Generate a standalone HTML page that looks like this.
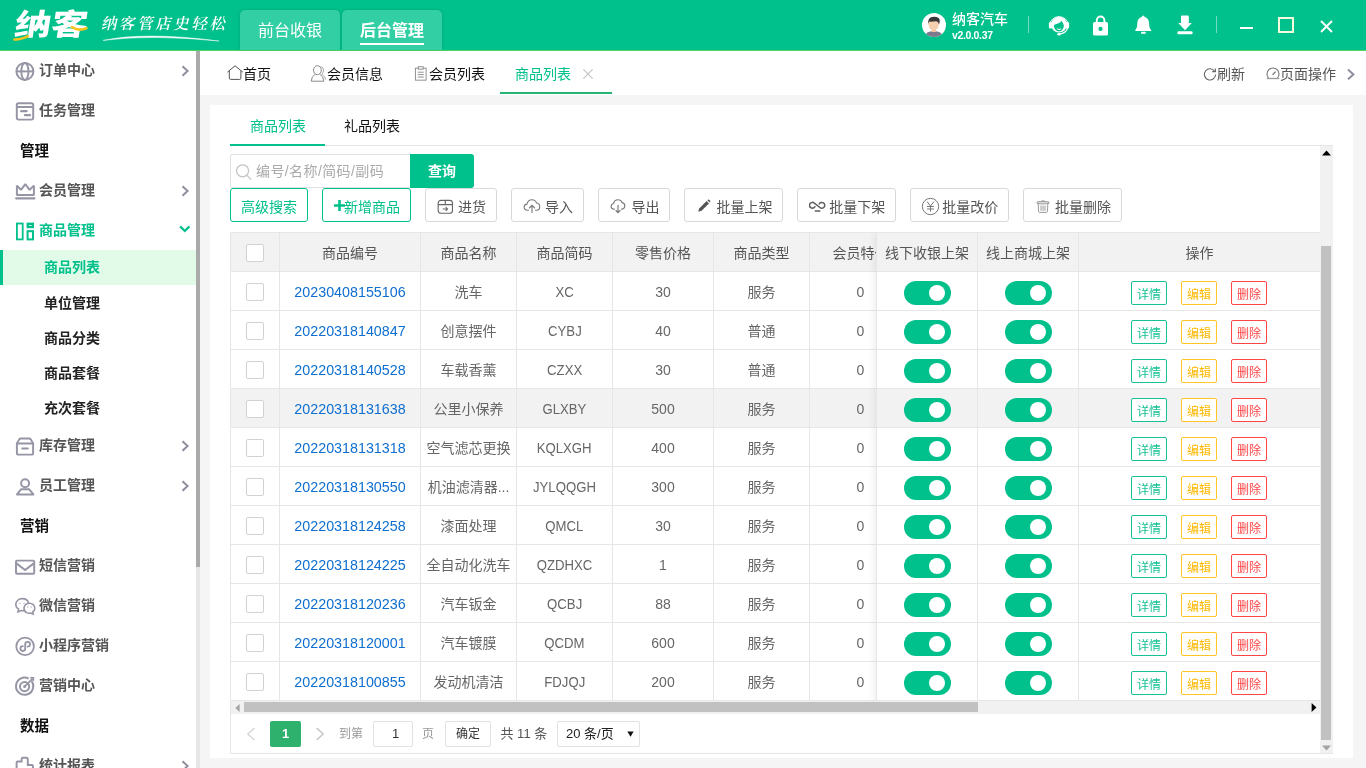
<!DOCTYPE html>
<html lang="zh-CN"><head><meta charset="utf-8"><title>纳客 - 商品列表</title>
<style>
*{box-sizing:border-box;margin:0;padding:0}
html,body{width:1366px;height:768px;overflow:hidden;background:#f5f5f5}
body{font-family:"Liberation Sans","Noto Sans CJK SC",sans-serif;font-size:14px;color:#333}
#app{will-change:transform;position:relative;width:1366px;height:768px;overflow:hidden;background:#f5f5f5}
.abs{position:absolute}
i{font-style:normal}
/* header */
.hd{position:absolute;left:0;top:0;width:1366px;height:51px;background:#00c08b;border-bottom:1px solid #4cd564}
.logo{position:absolute;left:15px;top:1.5px;font-family:"Liberation Sans","Noto Sans CJK SC",sans-serif;font-weight:900;font-size:35px;line-height:46px;color:#fff;letter-spacing:0;transform:skewX(-9deg) scale(1.04,.85);transform-origin:0 50%;white-space:nowrap}
.slogan{position:absolute;left:101.5px;top:12px;font-family:"Liberation Serif","Noto Serif CJK SC",serif;font-weight:600;font-size:15.5px;line-height:24px;color:#fff;letter-spacing:2.6px;transform:skewX(-12deg);white-space:nowrap}
.ntab{position:absolute;top:10px;height:40px;width:100px;box-shadow:0 0 3px rgba(0,80,50,.22);background:#33cfa4;border-radius:5px 5px 0 0;color:#fff;font-size:16px;line-height:42px;text-align:center}
.ntab.on{font-weight:bold}
.ntab.on:after{content:"";position:absolute;left:18px;right:18px;top:33px;height:2px;background:#fff}
.uname{position:absolute;left:952px;top:9.5px;font-size:14px;font-weight:500;color:#fff;line-height:18px;white-space:nowrap}
.uver{position:absolute;left:952px;top:28px;font-size:10.5px;font-weight:bold;color:#fff;line-height:14px;letter-spacing:-.35px}
.vsep{position:absolute;top:16px;width:1px;height:17px;background:rgba(255,255,255,.45)}
/* sidebar */
.sb{position:absolute;left:0;top:51px;width:196px;height:717px;background:#fff;overflow:hidden}
.sbar{position:absolute;left:196px;top:51px;width:4px;height:717px;background:#e6e6e6}
.sbar i{position:absolute;left:0;top:0;width:4px;height:516px;background:#aaa;display:block}
.mi{position:absolute;left:0;width:196px;height:40px;line-height:39px;font-weight:bold;color:#555;font-size:14px;padding-left:39px;white-space:nowrap}
.mi svg.ic{position:absolute;left:13px;top:8px;width:24px;height:24px}
.mi svg.ar{position:absolute;left:177.5px;top:13px;width:14px;height:14px}
.mi.on{color:#00c08b}
.mt{position:absolute;left:20px;width:160px;height:40px;line-height:40px;font-weight:bold;color:#111;font-size:14.5px}
.si{position:absolute;left:0;width:196px;height:35px;line-height:35px;font-weight:bold;color:#222;font-size:14px;padding-left:44px}
.si.on{background:#e2fbe9;color:#00c08b;border-left:3px solid #00c08b;padding-left:41px}
/* tab bar */
.tb{position:absolute;left:200px;top:51px;width:1166px;height:44px;background:#fff}
.tb .t{position:absolute;top:0;height:44px;line-height:46px;font-size:14px;color:#111;white-space:nowrap}
.tb .t.g{color:#555}
.tb .t.on{color:#00c08b}
.tb svg{position:absolute}
.tb .ul{position:absolute;left:300px;top:41px;width:112px;height:2px;background:#22b573}
/* card */
.card{position:absolute;left:210px;top:105px;width:1143px;height:653px;background:#fff}
.itab{position:absolute;top:0;height:41px;line-height:42px;font-size:14px;color:#111;white-space:nowrap}
.itab.on{color:#00c08b}
.iline{position:absolute;left:20px;top:40px;width:1103px;height:1px;background:#e6e6e6}
.iul{position:absolute;left:20px;top:39px;width:95px;height:2px;background:#00c08b}
.scr{position:absolute;left:20px;top:41px;width:1103px;height:608px;border-bottom:1px solid #e6e6e6}
.vsb{position:absolute;left:1110px;top:41px;width:13px;height:607px;background:#f1f1f1}
.vsb i{position:absolute;left:1px;top:100px;width:10px;height:494px;background:#c1c1c1;display:block}
.inp{position:absolute;left:20px;top:49px;width:181px;height:34px;border:1px solid #e0e0e0;border-radius:2px 0 0 2px;background:#fff;color:#aaa;line-height:32px;padding-left:25px;white-space:nowrap;letter-spacing:.4px}
.qbtn{position:absolute;left:200px;top:49px;width:64px;height:34px;background:#00c08b;color:#fff;font-weight:bold;text-align:center;line-height:34px;border-radius:0 3px 3px 0}
.btn{position:absolute;top:83px;height:34px;border:1px solid #d9d9d9;border-radius:3px;background:#fff;color:#555;line-height:36px;white-space:nowrap;font-size:14px}
.btn.g{border-color:#00c08b;color:#00c08b;text-align:center}
.btn span{position:absolute;top:0}
.btn svg{position:absolute}
/* table */
.tbl{position:absolute;left:20px;top:127px;width:1090px;height:469px;overflow:hidden;border-left:1px solid #e6e6e6;border-top:1px solid #e6e6e6}
.tr{position:absolute;left:0;width:1090px;height:39px}
.td{position:absolute;top:0;height:39px;border-right:1px solid #e6e6e6;border-bottom:1px solid #e6e6e6;text-align:center;line-height:41px;color:#666;white-space:nowrap;overflow:hidden;background:#fff}
.th .td{background:#f2f2f2;color:#555}
.hov .td{background:#f2f2f2}
.c1{left:0;width:49px}.c2{left:49px;width:141px}.c3{left:190px;width:96px}.c4{left:286px;width:96px}.c5{left:382px;width:101px}.c6{left:483px;width:96px}.c7{left:579px;width:102px}
.fix{position:absolute;left:645px;top:0;width:444px;height:468px;box-shadow:-1px 0 8px rgba(0,0,0,.08);border-left:1px solid #e6e6e6;background:#fff}
.fix .tr{width:444px}
.f1{left:0;width:101px}.f2{left:101px;width:101px}.f3{left:202px;width:242px}
.cb{position:absolute;left:15px;top:11px;width:18px;height:18px;border:1px solid #d2d2d2;border-radius:2px;background:#fff}
.lnk{color:#0e6fd0;font-size:14.3px}
.nw{display:inline-block;transform:scaleX(.94)}
.sw{position:absolute;left:27px;top:9px;width:47px;height:24px;border-radius:12px;background:#00c08b}
.sw i{position:absolute;left:25px;top:4px;width:16px;height:16px;border-radius:50%;background:#fff;display:block}
.ob{position:absolute;top:9px;width:36px;height:24px;border:1px solid;border-radius:2px;font-size:12px;line-height:26px;text-align:center;background:#fff}
.ob.g{left:52px;color:#16c195;border-color:#16c195}
.ob.y{left:102px;color:#ffb800;border-color:#ffc526}
.ob.r{left:152px;color:#ff4646;border-color:#ff4646}
/* bottom */
.hsb{position:absolute;left:21px;top:596px;width:1089px;height:13px;background:#f1f1f1}
.hsb i{position:absolute;left:13px;top:1px;width:734px;height:10px;background:#c1c1c1;display:block}
.lb{position:absolute;left:20px;top:127px;width:1px;height:522px;background:#e6e6e6}
.pg{position:absolute;top:616px;height:26px;line-height:26px;font-size:12px;white-space:nowrap}

</style></head><body>
<div id="app">
<div class="hd">
  <div class="logo">纳客</div>
  <svg class="abs" style="left:12px;top:24px" width="80" height="20" viewBox="0 0 80 20"><path d="M2.5 15.5 Q8 16 16 12.2" stroke="#f7c51e" stroke-width="2.6" fill="none" stroke-linecap="round"/><path d="M60 3 Q66 7.5 74.5 4.2" stroke="#f7c51e" stroke-width="2.6" fill="none" stroke-linecap="round"/></svg>
  <div class="slogan">纳客管店史轻松</div>
  <svg class="abs" style="left:100px;top:33px" width="125" height="10" viewBox="0 0 125 10"><path d="M3 7.4 Q45 -1.5 119 8 Q50 1.2 3 7.4Z" fill="#fff" stroke="#fff" stroke-width=".5" opacity=".95"/></svg>
  <div class="ntab" style="left:240px">前台收银</div>
  <div class="ntab on" style="left:342px">后台管理</div>
  <!-- avatar -->
  <svg class="abs" style="left:922px;top:13px" width="24" height="24" viewBox="0 0 24 24"><defs><clipPath id="av"><circle cx="12" cy="12" r="12"/></clipPath></defs><circle cx="12" cy="12" r="12" fill="#fff"/><g clip-path="url(#av)"><path d="M2.5 24 Q3.5 18 11.7 18 Q20 18 21 24Z" fill="#7b7b8d"/><rect x="9.6" y="15" width="4.4" height="4" fill="#f0c3a0"/><ellipse cx="11.7" cy="11.6" rx="5.1" ry="5.8" fill="#f6cfae"/><path d="M6.3 11.4 Q5.2 3.8 11.8 3.8 Q16.4 3.6 17.6 6.4 Q18 8.6 17 11.4 Q16.4 8.6 14.4 8.2 Q10 8.8 7.4 8.6 Q6.6 9.6 6.3 11.4Z" fill="#37373a"/></g></svg>
  <div class="uname">纳客汽车</div>
  <div class="uver">v2.0.0.37</div>
  <div class="vsep" style="left:1028px"></div>
  <!-- headset -->
  <svg class="abs" style="left:1047px;top:13px" width="24" height="24" viewBox="0 0 24 24"><path d="M2.4 12 A9.7 9.7 0 0 1 21.6 12" fill="none" stroke="#fff" stroke-width="1"/><rect x="1.9" y="9" width="3.6" height="6.6" rx="1.5" fill="#fff"/><rect x="18.5" y="9" width="3.6" height="6.6" rx="1.5" fill="#fff"/><circle cx="12" cy="11.6" r="7.9" fill="#fff"/><path d="M6.9 13 Q6.7 11.6 8.6 11.2 Q12.6 10.6 14.6 8 Q16.2 10 16.9 12.6 Q17 16 14.4 17.7 Q12 19 9.6 17.7 Q7.2 16 6.9 13Z" fill="#00c08b"/><path d="M9.8 15.8 Q12 17.2 14.2 15.8" stroke="#fff" stroke-width="1" fill="none"/><path d="M20.6 14.6 Q19.8 19.6 13 21" stroke="#fff" stroke-width="1.2" fill="none"/><ellipse cx="12" cy="21.3" rx="1.9" ry="1.3" fill="#fff"/></svg>
  <!-- lock -->
  <svg class="abs" style="left:1089px;top:13px" width="24" height="24" viewBox="0 0 24 24"><path d="M7.8 10.5 V7.3 A3.8 3.8 0 0 1 15.4 7.3 V10.5" fill="none" stroke="#fff" stroke-width="1.9"/><rect x="4" y="9" width="15" height="13.5" rx="1.6" fill="#fff"/><circle cx="11.5" cy="15.9" r="2.1" fill="#00c08b"/></svg>
  <!-- bell -->
  <svg class="abs" style="left:1131px;top:13px" width="24" height="24" viewBox="0 0 24 24"><path d="M12.2 2.5 C11.4 2.5 11.2 3.4 10.8 3.7 C7.4 5 6.3 7.6 6.3 10.8 C6.3 14 5.6 15.4 4.3 16.9 Q3.9 18.1 5 18.1 H19.4 Q20.5 18.1 20.1 16.9 C18.8 15.4 18.1 14 18.1 10.8 C18.1 7.6 17 5 13.6 3.7 C13.2 3.4 13 2.5 12.2 2.5Z" fill="#fff"/><rect x="10" y="18.8" width="4.8" height="2" rx=".9" fill="#fff"/></svg>
  <!-- download -->
  <svg class="abs" style="left:1173px;top:13px" width="24" height="24" viewBox="0 0 24 24"><path d="M8 3.6 Q8 2.6 9 2.6 H14.8 Q15.8 2.6 15.8 3.6 V10.1 H18.8 L12 17.3 L5.3 10.1 H8Z" fill="#fff"/><rect x="4.4" y="18.3" width="15.2" height="2.9" rx="1.2" fill="#fff"/></svg>
  <div class="vsep" style="left:1216px"></div>
  <div class="abs" style="left:1240px;top:27px;width:13px;height:2px;background:#fff"></div>
  <div class="abs" style="left:1278px;top:17px;width:16px;height:16px;border:2px solid #f4fbdc"></div>
  <svg class="abs" style="left:1320px;top:20px" width="13" height="13" viewBox="0 0 13 13"><path d="M1 1 L12 12 M12 1 L1 12" stroke="#fff" stroke-width="1.9" fill="none"/></svg>
</div>

<div class="sb">
  <div class="mi" style="top:0"><svg class="ic" viewBox="0 0 24 24" fill="none" stroke="#9595a5" stroke-width="1.95"><circle cx="11.9" cy="12.4" r="8.5"/><path d="M3.4 12.4 H20.4"/><ellipse cx="11.9" cy="12.4" rx="3.6" ry="8.5"/></svg>订单中心<svg class="ar" viewBox="0 0 14 14"><path d="M4.5 2.2 L9.6 7 L4.5 11.8" fill="none" stroke="#8e8e9e" stroke-width="2"/></svg></div>
  <div class="mi" style="top:40px"><svg class="ic" viewBox="0 0 24 24" fill="none" stroke="#9595a5" stroke-width="1.95"><rect x="3.8" y="4.2" width="16.4" height="16.4" rx="1.8"/><path d="M3.8 8 H20.2"/><path d="M8.2 12.2 H13.6 M12 16.2 H17" stroke-linecap="round" stroke-width="2.2"/></svg>任务管理</div>
  <div class="mt" style="top:80px">管理</div>
  <div class="mi" style="top:120px"><svg class="ic" viewBox="0 0 24 24" fill="none" stroke="#9595a5" stroke-width="1.95"><path d="M3.9 6.6 V16 H20.9 V6.6 L16.6 10.8 L12.3 5.2 L8 10.8 Z" stroke-linejoin="bevel"/><path d="M3.2 19.4 H21.4" stroke-width="2.1" stroke-linecap="round"/></svg>会员管理<svg class="ar" viewBox="0 0 14 14"><path d="M4.5 2.2 L9.6 7 L4.5 11.8" fill="none" stroke="#8e8e9e" stroke-width="2"/></svg></div>
  <div class="mi on" style="top:160px"><svg class="ic" viewBox="0 0 24 24" fill="none" stroke="#00c08b" stroke-width="1.8"><rect x="3.9" y="4.5" width="5.8" height="15.9"/><rect x="14.8" y="4.8" width="5" height="3.2" stroke-width="2.4"/><rect x="14.6" y="12.2" width="5.4" height="8.2" stroke-width="2"/></svg>商品管理<svg class="ar" viewBox="0 0 14 14"><path d="M2.2 2.4 L6.8 7 L11.4 2.4" fill="none" stroke="#00c08b" stroke-width="2.2"/></svg></div>
  <div class="si on" style="top:199px">商品列表</div>
  <div class="si" style="top:235px">单位管理</div>
  <div class="si" style="top:270px">商品分类</div>
  <div class="si" style="top:305px">商品套餐</div>
  <div class="si" style="top:340px">充次套餐</div>
  <div class="mi" style="top:375px"><svg class="ic" viewBox="0 0 24 24" fill="none" stroke="#9595a5" stroke-width="1.95"><path d="M3.9 9.6 L6.2 5.4 Q6.8 4.4 8 4.4 H16 Q17.2 4.4 17.8 5.4 L20.1 9.6"/><path d="M3.9 9.4 H20.1 V19 Q20.1 20.6 18.5 20.6 H5.5 Q3.9 20.6 3.9 19 Z"/><path d="M9.2 14.4 H14.8" stroke-linecap="round" stroke-width="2"/></svg>库存管理<svg class="ar" viewBox="0 0 14 14"><path d="M4.5 2.2 L9.6 7 L4.5 11.8" fill="none" stroke="#8e8e9e" stroke-width="2"/></svg></div>
  <div class="mi" style="top:415px"><svg class="ic" viewBox="0 0 24 24" fill="none" stroke="#9595a5" stroke-width="1.95"><circle cx="12.1" cy="9.3" r="4"/><path d="M4 20.4 L8 15.3 H16.2 L20.4 20.4 Z" stroke-linejoin="round"/></svg>员工管理<svg class="ar" viewBox="0 0 14 14"><path d="M4.5 2.2 L9.6 7 L4.5 11.8" fill="none" stroke="#8e8e9e" stroke-width="2"/></svg></div>
  <div class="mt" style="top:455px">营销</div>
  <div class="mi" style="top:495px"><svg class="ic" viewBox="0 0 24 24" fill="none" stroke="#9595a5" stroke-width="1.95"><rect x="3" y="6.6" width="18.2" height="13.2" rx="1"/><path d="M3.4 9.4 L12.1 16 L20.8 9.4"/></svg>短信营销</div>
  <div class="mi" style="top:535px"><svg class="ic" viewBox="0 0 24 24" fill="none" stroke="#9595a5" stroke-width="1.6"><path d="M11.4 16.6 Q9.8 17 8.2 16.6 L5 18 L5.6 15.2 Q2.8 13.4 2.8 10.6 C2.8 7 5.8 4.6 9.2 4.6 C12.4 4.6 15 6.6 15.6 9.4"/><path d="M16.4 9.2 C19.4 9.2 21.8 11.4 21.8 14.2 Q21.8 16.4 19.8 17.9 L20.2 20.2 L17.8 19 Q15.6 19.6 13.6 18.6 C12 17.8 11 16.2 11 14.2 C11 11.4 13.4 9.2 16.4 9.2Z" fill="#fff"/><circle cx="7" cy="9.3" r=".6" fill="#9595a5" stroke="none"/><circle cx="11" cy="9.3" r=".6" fill="#9595a5" stroke="none"/><circle cx="14.6" cy="13" r=".6" fill="#9595a5" stroke="none"/><circle cx="18.2" cy="13" r=".6" fill="#9595a5" stroke="none"/></svg>微信营销</div>
  <div class="mi" style="top:575px"><svg class="ic" viewBox="0 0 24 24" fill="none" stroke="#9595a5" stroke-width="1.8"><circle cx="12.1" cy="12.4" r="8.8"/><path d="M12.2 14.8 V10.2 A2.4 2.4 0 1 1 14.6 12.6 M12.2 10.2 V14.6 A2.4 2.4 0 1 1 9.8 12.2" stroke-linecap="round" stroke-width="1.8"/></svg>小程序营销</div>
  <div class="mi" style="top:615px"><svg class="ic" viewBox="0 0 24 24" fill="none" stroke="#9595a5" stroke-width="2"><path d="M18.6 7.2 A8.6 8.6 0 1 1 15.6 4.6"/><circle cx="11.6" cy="12.6" r="4.6"/><circle cx="11.6" cy="12.6" r="1.5" fill="#9595a5" stroke="none"/><path d="M11.8 12.4 L19.6 4.6" stroke-width="1.8"/><path d="M17.2 3.8 H20.4 V7" stroke-width="1.6"/></svg>营销中心</div>
  <div class="mt" style="top:655px">数据</div>
  <div class="mi" style="top:695px"><svg class="ic" viewBox="0 0 24 24" fill="none" stroke="#9595a5" stroke-width="1.95"><path d="M3.6 21 V8.4 Q3.6 7.5 4.5 7.5 H8.6 V5.2 Q8.6 3.7 10.1 3.7 H13.3 Q14.8 3.7 14.8 5.2 V11 H19 Q19.9 11 19.9 11.9 V21"/></svg>统计报表<svg class="ar" viewBox="0 0 14 14"><path d="M4.5 2.2 L9.6 7 L4.5 11.8" fill="none" stroke="#8e8e9e" stroke-width="2"/></svg></div>
</div>
<div class="sbar"><i></i></div>

<div class="tb">
  <svg style="left:26px;top:13px" width="18" height="18" viewBox="0 0 18 18" fill="none" stroke="#555" stroke-width="1"><path d="M1.4 8.1 L9.1 1.8 L16.8 8.1 M3.3 6.9 V14.2 Q3.3 15.4 4.5 15.4 H13.7 Q14.9 15.4 14.9 14.2 V6.9"/></svg>
  <div class="t" style="left:43px">首页</div>
  <svg style="left:110px;top:13px" width="18" height="20" viewBox="0 0 18 20" fill="none" stroke="#8a8a8a" stroke-width="1"><ellipse cx="7.4" cy="6.2" rx="3.9" ry="4.5"/><path d="M5.2 10.2 Q1.4 12.4 1.2 17.2 H13.8 Q13.6 12.4 9.8 10.2"/><path d="M10.6 2.4 Q13.8 3 13.6 6.6 Q13.4 9.2 11.6 10.2 Q15.4 12.2 15.8 15.6" stroke="#aaa"/></svg>
  <div class="t" style="left:127px">会员信息</div>
  <svg style="left:214px;top:14px" width="15" height="17" viewBox="0 0 16 18" fill="none" stroke="#8a8a8a" stroke-width="1"><rect x="1.5" y="3.3" width="11.4" height="12.8"/><rect x="4.6" y="1.8" width="5.2" height="2.6" fill="#fff"/><path d="M4 7.6 H10.4 M4 10.2 H10.4 M4 12.8 H10.4"/></svg>
  <div class="t" style="left:229px">会员列表</div>
  <div class="t on" style="left:315px">商品列表</div>
  <svg style="left:382px;top:17px" width="12" height="12" viewBox="0 0 12 12"><path d="M1.4 1.4 L10.6 10.6 M10.6 1.4 L1.4 10.6" stroke="#c2c2c2" stroke-width="1.1" fill="none"/></svg>
  <div class="ul"></div>
  <svg style="left:1003px;top:15.5px" width="14" height="14" viewBox="0 0 14 14" fill="none" stroke="#666" stroke-width="1.1"><path d="M11.6 4.2 A5.6 5.6 0 1 0 12.6 7.6"/><path d="M12.4 1.4 V4.6 H9.2"/></svg>
  <div class="t g" style="left:1017px">刷新</div>
  <svg style="left:1065px;top:16.3px" width="16" height="14" viewBox="0 0 16 14" fill="none" stroke="#777" stroke-width="1.1"><path d="M3.5 11 A6 6 0 1 1 12.5 11"/><path d="M1.8 11.5 H14.2" stroke="#999" stroke-width="1.3"/><path d="M7.6 7.8 L10.6 4.6" stroke-width="1.3"/></svg>
  <div class="t g" style="left:1080px">页面操作</div>
  <svg style="left:1145px;top:15.5px" width="12" height="14" viewBox="0 0 12 14"><path d="M3 2.6 L8.4 7.4 L3 12.2" fill="none" stroke="#8e8e9e" stroke-width="2"/></svg>
</div>

<div class="card">
<div class="scr"></div>
<div class="itab on" style="left:40px">商品列表</div>
<div class="itab" style="left:134px">礼品列表</div>
<div class="iline"></div><div class="iul"></div>
<div class="vsb"><i></i>
 <svg class="abs" style="left:2px;top:4px" width="9" height="6" viewBox="0 0 9 6"><path d="M0 5.5 L4.5 0.5 L9 5.5Z" fill="#000"/></svg>
 <svg class="abs" style="left:2px;top:599px" width="9" height="6" viewBox="0 0 9 6"><path d="M0 .5 L4.5 5.5 L9 .5Z" fill="#a3a3a3"/></svg>
</div>
<div class="inp"><svg class="abs" style="left:4px;top:8px" width="18" height="18" viewBox="0 0 18 18" fill="none" stroke="#c4c4c4" stroke-width="1.3"><circle cx="7.6" cy="7.8" r="6"/><path d="M12 12.4 L16.2 16.6"/></svg>编号/名称/简码/副码</div>
<div class="qbtn">查询</div>
<div class="btn g" style="left:20px;width:78px">高级搜索</div>
<div class="btn g" style="left:112px;width:89px"><svg style="left:11px;top:11px" width="11" height="11" viewBox="0 0 11 11"><path d="M5.5 0 V11 M0 5.5 H11" stroke="#00c08b" stroke-width="2.6"/></svg><span style="left:21px">新增商品</span></div>
<div class="btn" style="left:215px;width:72px"><svg style="left:11px;top:9.5px" width="17" height="16" viewBox="0 0 18 17" fill="none" stroke="#666" stroke-width="1.2"><rect x="1.2" y="1.4" width="15.2" height="13.8" rx="3"/><path d="M1.2 6 H16.4 M8.8 1.4 V6"/><path d="M6 10.6 H11 M9.2 8.6 L11.2 10.6 L9.2 12.6" stroke-width="1.1"/></svg><span style="left:32px">进货</span></div>
<div class="btn" style="left:301px;width:73px"><svg style="left:10.5px;top:8.5px" width="18" height="16.2" viewBox="0 0 20 18" fill="none" stroke="#777" stroke-width="1.2"><path d="M6.6 13.6 H4.8 Q1.2 13.2 1.2 10 Q1.4 7.2 4.4 6.8 Q5.4 2 10 2 Q13.8 2 15 5.6 Q18.6 6 18.6 9.6 Q18.6 13.2 15 13.6 H13.4"/><path d="M10 16.8 V8.4 M6.8 11.4 L10 8.2 L13.2 11.4"/></svg><span style="left:33px">导入</span></div>
<div class="btn" style="left:388px;width:72px"><svg style="left:11px;top:8.5px" width="16" height="16" viewBox="0 0 18 18" fill="none" stroke="#777" stroke-width="1.3"><path d="M5.4 12.6 H4.6 Q1.2 12.2 1.2 9.2 Q1.4 6.6 4 6.2 Q5 2 9 2 Q12.4 2 13.6 5.2 Q16.6 5.6 16.6 8.8 Q16.6 12.2 13.4 12.6 H12.4"/><path d="M9 8 V16.4 M6.4 13.8 L9 16.4 L11.6 13.8"/></svg><span style="left:32.5px">导出</span></div>
<div class="btn" style="left:474px;width:99px"><svg style="left:12px;top:10px" width="14" height="14" viewBox="0 0 14 14"><path d="M1.2 12.8 L2.2 9.4 L9.6 2 L12 4.4 L4.6 11.8 Z" fill="#555"/><path d="M10.4 1.2 L11.2 .6 Q11.8 .4 12.4 1 L13 1.6 Q13.6 2.2 13.2 2.8 L12.6 3.6Z" fill="#555"/></svg><span style="left:31.5px">批量上架</span></div>
<div class="btn" style="left:587px;width:99px"><svg style="left:11px;top:10px" width="17" height="14" viewBox="0 0 17 14" fill="none" stroke="#5e5e5e" stroke-width="1.5"><path d="M5.9 7.7 A2.9 2.9 0 1 1 5.3 4.1 L10.9 8.5 A2.9 2.9 0 1 0 10.3 4.9" stroke-linecap="round"/><path d="M6.4 12 H10.8" stroke-linecap="round" stroke-width="1.6"/></svg><span style="left:31.3px">批量下架</span></div>
<div class="btn" style="left:700px;width:99px"><svg style="left:9.8px;top:7.5px" width="19" height="19" viewBox="0 0 20 20" fill="none" stroke="#777" stroke-width="1.05"><circle cx="10" cy="10" r="8.6"/><path d="M6.4 4.8 L10 9.6 L13.6 4.8 M10 9.6 V15.4 M6.4 10 H13.6 M6.4 12.6 H13.6"/></svg><span style="left:31.3px">批量改价</span></div>
<div class="btn" style="left:813px;width:99px"><svg style="left:12px;top:10.5px" width="14" height="13" viewBox="0 0 14 13" fill="none" stroke="#9a9a9a" stroke-width="1"><path d="M.6 2.7 Q.6 1.5 7 1.5 Q13.4 1.5 13.4 2.7 Q13.4 3.9 7 3.9 Q.6 3.9 .6 2.7Z" fill="#ddd"/><path d="M5 1.3 Q7 .2 9 1.3"/><path d="M2.2 4 L2.6 11.6 Q2.7 12.4 3.6 12.4 H10.4 Q11.3 12.4 11.4 11.6 L11.8 4"/><path d="M5 5.6 V10.8 M7 5.6 V10.8 M9 5.6 V10.8"/></svg><span style="left:31px">批量删除</span></div>

<div class="tbl">
<div class="tr th" style="top:0"><div class="td c1"><span class="cb"></span></div><div class="td c2">商品编号</div><div class="td c3">商品名称</div><div class="td c4">商品简码</div><div class="td c5">零售价格</div><div class="td c6">商品类型</div><div class="td c7">会员特价</div></div>
<div class="tr" style="top:39px"><div class="td c1"><span class="cb"></span></div><div class="td c2"><a class="lnk">20230408155106</a></div><div class="td c3">洗车</div><div class="td c4"><span class="nw">XC</span></div><div class="td c5">30</div><div class="td c6">服务</div><div class="td c7">0</div></div>
<div class="tr" style="top:78px"><div class="td c1"><span class="cb"></span></div><div class="td c2"><a class="lnk">20220318140847</a></div><div class="td c3">创意摆件</div><div class="td c4"><span class="nw">CYBJ</span></div><div class="td c5">40</div><div class="td c6">普通</div><div class="td c7">0</div></div>
<div class="tr" style="top:117px"><div class="td c1"><span class="cb"></span></div><div class="td c2"><a class="lnk">20220318140528</a></div><div class="td c3">车载香薰</div><div class="td c4"><span class="nw">CZXX</span></div><div class="td c5">30</div><div class="td c6">普通</div><div class="td c7">0</div></div>
<div class="tr hov" style="top:156px"><div class="td c1"><span class="cb"></span></div><div class="td c2"><a class="lnk">20220318131638</a></div><div class="td c3">公里小保养</div><div class="td c4"><span class="nw">GLXBY</span></div><div class="td c5">500</div><div class="td c6">服务</div><div class="td c7">0</div></div>
<div class="tr" style="top:195px"><div class="td c1"><span class="cb"></span></div><div class="td c2"><a class="lnk">20220318131318</a></div><div class="td c3">空气滤芯更换</div><div class="td c4"><span class="nw">KQLXGH</span></div><div class="td c5">400</div><div class="td c6">服务</div><div class="td c7">0</div></div>
<div class="tr" style="top:234px"><div class="td c1"><span class="cb"></span></div><div class="td c2"><a class="lnk">20220318130550</a></div><div class="td c3">机油滤清器...</div><div class="td c4"><span class="nw">JYLQQGH</span></div><div class="td c5">300</div><div class="td c6">服务</div><div class="td c7">0</div></div>
<div class="tr" style="top:273px"><div class="td c1"><span class="cb"></span></div><div class="td c2"><a class="lnk">20220318124258</a></div><div class="td c3">漆面处理</div><div class="td c4"><span class="nw">QMCL</span></div><div class="td c5">30</div><div class="td c6">服务</div><div class="td c7">0</div></div>
<div class="tr" style="top:312px"><div class="td c1"><span class="cb"></span></div><div class="td c2"><a class="lnk">20220318124225</a></div><div class="td c3">全自动化洗车</div><div class="td c4"><span class="nw">QZDHXC</span></div><div class="td c5">1</div><div class="td c6">服务</div><div class="td c7">0</div></div>
<div class="tr" style="top:351px"><div class="td c1"><span class="cb"></span></div><div class="td c2"><a class="lnk">20220318120236</a></div><div class="td c3">汽车钣金</div><div class="td c4"><span class="nw">QCBJ</span></div><div class="td c5">88</div><div class="td c6">服务</div><div class="td c7">0</div></div>
<div class="tr" style="top:390px"><div class="td c1"><span class="cb"></span></div><div class="td c2"><a class="lnk">20220318120001</a></div><div class="td c3">汽车镀膜</div><div class="td c4"><span class="nw">QCDM</span></div><div class="td c5">600</div><div class="td c6">服务</div><div class="td c7">0</div></div>
<div class="tr" style="top:429px"><div class="td c1"><span class="cb"></span></div><div class="td c2"><a class="lnk">20220318100855</a></div><div class="td c3">发动机清洁</div><div class="td c4"><span class="nw">FDJQJ</span></div><div class="td c5">200</div><div class="td c6">服务</div><div class="td c7">0</div></div>
<div class="fix">
<div class="tr th" style="top:0"><div class="td f1">线下收银上架</div><div class="td f2">线上商城上架</div><div class="td f3">操作</div></div>
<div class="tr" style="top:39px"><div class="td f1"><span class="sw"><i></i></span></div><div class="td f2"><span class="sw"><i></i></span></div><div class="td f3"><span class="ob g">详情</span><span class="ob y">编辑</span><span class="ob r">删除</span></div></div>
<div class="tr" style="top:78px"><div class="td f1"><span class="sw"><i></i></span></div><div class="td f2"><span class="sw"><i></i></span></div><div class="td f3"><span class="ob g">详情</span><span class="ob y">编辑</span><span class="ob r">删除</span></div></div>
<div class="tr" style="top:117px"><div class="td f1"><span class="sw"><i></i></span></div><div class="td f2"><span class="sw"><i></i></span></div><div class="td f3"><span class="ob g">详情</span><span class="ob y">编辑</span><span class="ob r">删除</span></div></div>
<div class="tr hov" style="top:156px"><div class="td f1"><span class="sw"><i></i></span></div><div class="td f2"><span class="sw"><i></i></span></div><div class="td f3"><span class="ob g">详情</span><span class="ob y">编辑</span><span class="ob r">删除</span></div></div>
<div class="tr" style="top:195px"><div class="td f1"><span class="sw"><i></i></span></div><div class="td f2"><span class="sw"><i></i></span></div><div class="td f3"><span class="ob g">详情</span><span class="ob y">编辑</span><span class="ob r">删除</span></div></div>
<div class="tr" style="top:234px"><div class="td f1"><span class="sw"><i></i></span></div><div class="td f2"><span class="sw"><i></i></span></div><div class="td f3"><span class="ob g">详情</span><span class="ob y">编辑</span><span class="ob r">删除</span></div></div>
<div class="tr" style="top:273px"><div class="td f1"><span class="sw"><i></i></span></div><div class="td f2"><span class="sw"><i></i></span></div><div class="td f3"><span class="ob g">详情</span><span class="ob y">编辑</span><span class="ob r">删除</span></div></div>
<div class="tr" style="top:312px"><div class="td f1"><span class="sw"><i></i></span></div><div class="td f2"><span class="sw"><i></i></span></div><div class="td f3"><span class="ob g">详情</span><span class="ob y">编辑</span><span class="ob r">删除</span></div></div>
<div class="tr" style="top:351px"><div class="td f1"><span class="sw"><i></i></span></div><div class="td f2"><span class="sw"><i></i></span></div><div class="td f3"><span class="ob g">详情</span><span class="ob y">编辑</span><span class="ob r">删除</span></div></div>
<div class="tr" style="top:390px"><div class="td f1"><span class="sw"><i></i></span></div><div class="td f2"><span class="sw"><i></i></span></div><div class="td f3"><span class="ob g">详情</span><span class="ob y">编辑</span><span class="ob r">删除</span></div></div>
<div class="tr" style="top:429px"><div class="td f1"><span class="sw"><i></i></span></div><div class="td f2"><span class="sw"><i></i></span></div><div class="td f3"><span class="ob g">详情</span><span class="ob y">编辑</span><span class="ob r">删除</span></div></div>
</div>
</div>
<div class="lb"></div>
<div class="hsb"><i></i>
 <svg class="abs" style="left:4px;top:3px" width="5" height="8" viewBox="0 0 5 8"><path d="M4.6 0 L.4 4 L4.6 8Z" fill="#a3a3a3"/></svg>
 <svg class="abs" style="left:1080px;top:2px" width="6" height="9" viewBox="0 0 6 9"><path d="M.6 0 L5.4 4.5 L.6 9Z" fill="#000"/></svg>
</div>
<svg class="abs" style="left:36px;top:622px" width="10" height="14" viewBox="0 0 10 14"><path d="M8.4 1 L1.8 7 L8.4 13" fill="none" stroke="#d2d2d2" stroke-width="1.2"/></svg>
<div class="pg" style="left:60px;width:31px;background:#2fb16e;color:#fff;text-align:center;border-radius:2px;font-weight:bold;font-size:13px">1</div>
<svg class="abs" style="left:105px;top:622px" width="10" height="14" viewBox="0 0 10 14"><path d="M1.6 1 L8.2 7 L1.6 13" fill="none" stroke="#bdbdbd" stroke-width="1.2"/></svg>
<div class="pg" style="left:129px;color:#999">到第</div>
<div class="pg" style="left:163px;width:40px;border:1px solid #e2e2e2;border-radius:2px;text-align:center;color:#333;line-height:24px;font-size:13px;padding-left:5px">1</div>
<div class="pg" style="left:212px;color:#999">页</div>
<div class="pg" style="left:235px;width:46px;border:1px solid #e2e2e2;border-radius:2px;text-align:center;color:#333;line-height:24px">确定</div>
<div class="pg" style="left:290.5px;color:#555;font-size:13px">共 11 条</div>
<div class="pg" style="left:347px;width:83px;border:1px solid #e2e2e2;border-radius:2px;color:#222;line-height:24px;padding-left:8px;font-size:13px">20 条/页<svg class="abs" style="left:68.5px;top:9px" width="7" height="6.4" viewBox="0 0 8 7"><path d="M.4 .4 H7.6 L4 6.4Z" fill="#111"/></svg></div>

</div>
</div>
</body></html>
